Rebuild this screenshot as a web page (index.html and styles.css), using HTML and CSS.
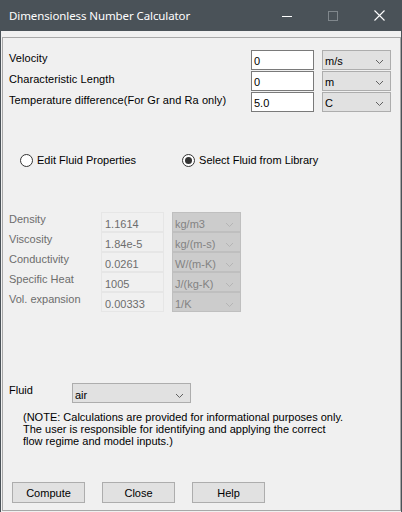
FILE: index.html
```html
<!DOCTYPE html>
<html>
<head>
<meta charset="utf-8">
<link rel="stylesheet" href="styles.css">
</head>
<body>
<div class="window">
  <div class="titlebar">
    <div class="title">Dimensionless Number Calculator</div>
    <div class="caption-btns">
      <div class="cap-btn"><svg width="10" height="10" viewBox="0 0 10 10"><line x1="0" y1="5.5" x2="10" y2="5.5" stroke="#ffffff" stroke-width="1"/></svg></div>
      <div class="cap-btn"><svg width="10" height="10" viewBox="0 0 10 10"><rect x="0.5" y="0.5" width="9" height="9" fill="none" stroke="#80878c" stroke-width="1"/></svg></div>
      <div class="cap-btn"><svg width="11" height="11" viewBox="0 0 11 11"><path d="M0.5 0.5 L10.5 10.5 M10.5 0.5 L0.5 10.5" stroke="#ffffff" stroke-width="1.1" fill="none"/></svg></div>
    </div>
  </div>
  <div class="client">
    <div class="panel">
      <div class="params">
        <div class="prow">
          <div class="plabel">Velocity</div>
          <div class="tbox">0</div>
          <div class="combo"><span>m/s</span><svg class="chev" width="7" height="4" viewBox="0 0 7 4"><polyline points="0,0 3.5,3.5 7,0" fill="none" stroke="#606060" stroke-width="1"/></svg></div>
        </div>
        <div class="prow">
          <div class="plabel">Characteristic Length</div>
          <div class="tbox">0</div>
          <div class="combo"><span>m</span><svg class="chev" width="7" height="4" viewBox="0 0 7 4"><polyline points="0,0 3.5,3.5 7,0" fill="none" stroke="#606060" stroke-width="1"/></svg></div>
        </div>
        <div class="prow">
          <div class="plabel">Temperature difference(For Gr and Ra only)</div>
          <div class="tbox">5.0</div>
          <div class="combo"><span>C</span><svg class="chev" width="7" height="4" viewBox="0 0 7 4"><polyline points="0,0 3.5,3.5 7,0" fill="none" stroke="#606060" stroke-width="1"/></svg></div>
        </div>
      </div>

      <div class="radios">
        <div class="radio"><span class="circle"></span><span>Edit Fluid Properties</span></div>
        <div class="radio radio-second"><span class="circle checked"></span><span>Select Fluid from Library</span></div>
      </div>

      <div class="props">
        <div class="qrow"><div class="qlabel">Density</div><div class="dbox">1.1614</div><div class="dcombo"><span>kg/m3</span><svg class="chev" width="7" height="4" viewBox="0 0 7 4"><polyline points="0,0 3.5,3.5 7,0" fill="none" stroke="#b5b5b5" stroke-width="1"/></svg></div></div>
        <div class="qrow"><div class="qlabel">Viscosity</div><div class="dbox">1.84e-5</div><div class="dcombo"><span>kg/(m-s)</span><svg class="chev" width="7" height="4" viewBox="0 0 7 4"><polyline points="0,0 3.5,3.5 7,0" fill="none" stroke="#b5b5b5" stroke-width="1"/></svg></div></div>
        <div class="qrow"><div class="qlabel">Conductivity</div><div class="dbox">0.0261</div><div class="dcombo"><span>W/(m-K)</span><svg class="chev" width="7" height="4" viewBox="0 0 7 4"><polyline points="0,0 3.5,3.5 7,0" fill="none" stroke="#b5b5b5" stroke-width="1"/></svg></div></div>
        <div class="qrow"><div class="qlabel">Specific Heat</div><div class="dbox">1005</div><div class="dcombo"><span>J/(kg-K)</span><svg class="chev" width="7" height="4" viewBox="0 0 7 4"><polyline points="0,0 3.5,3.5 7,0" fill="none" stroke="#b5b5b5" stroke-width="1"/></svg></div></div>
        <div class="qrow"><div class="qlabel">Vol. expansion</div><div class="dbox">0.00333</div><div class="dcombo"><span>1/K</span><svg class="chev" width="7" height="4" viewBox="0 0 7 4"><polyline points="0,0 3.5,3.5 7,0" fill="none" stroke="#b5b5b5" stroke-width="1"/></svg></div></div>
      </div>

      <div class="fluid">
        <div class="flabel">Fluid</div>
        <div class="fcombo"><span>air</span><svg class="chev" width="7" height="4" viewBox="0 0 7 4"><polyline points="0,0 3.5,3.5 7,0" fill="none" stroke="#606060" stroke-width="1"/></svg></div>
      </div>

      <div class="note">(NOTE: Calculations are provided for informational purposes only.<br>The user is responsible for identifying and applying the correct<br>flow regime and model inputs.)</div>

      <div class="buttons">
        <div class="btn">Compute</div>
        <div class="btn">Close</div>
        <div class="btn">Help</div>
      </div>
    </div>
  </div>
</div>
</body>
</html>
```

FILE: styles.css
```css
* { box-sizing: border-box; }
html, body { margin: 0; padding: 0; }
body {
  width: 402px;
  height: 512px;
  overflow: hidden;
  font-family: "Liberation Sans", Arial, sans-serif;
  font-size: 11px;
  color: #000;
}
.window {
  width: 402px;
  height: 512px;
  display: flex;
  flex-direction: column;
  background: #4a5258;
}
.titlebar {
  height: 31px;
  flex: none;
  display: flex;
  align-items: center;
  justify-content: space-between;
  color: #ffffff;
}
.title {
  font-family: "Noto Sans", "Open Sans", sans-serif;
  font-size: 11.5px;
  padding-left: 9px;
  padding-bottom: 1px;
  letter-spacing: -0.1px;
}
.caption-btns {
  display: flex;
  height: 31px;
}
.cap-btn {
  width: 46px;
  height: 31px;
  display: flex;
  align-items: center;
  justify-content: center;
}
.cap-btn svg { display: block; }
.client {
  flex: 1;
  margin: 0 1px 1px 1px;
  background: #f0f0f0;
  display: flex;
  flex-direction: column;
}
.panel {
  margin: 6px 0 1px 1px;
  height: 474px;
  border: 1px solid #a8a8a8;
  display: flex;
  flex-direction: column;
}
.params {
  margin-top: 12px;
  display: flex;
  flex-direction: column;
  gap: 1px;
}
.prow {
  display: flex;
  height: 20px;
  padding-left: 6px;
}
.plabel {
  flex: 1;
  line-height: 13px;
  padding-top: 2px;
  letter-spacing: 0.08px;
}
.tbox {
  width: 63px;
  height: 20px;
  border: 1px solid #7a7a7a;
  background: #ffffff;
  padding: 3px 0 0 2px;
  line-height: 14px;
}
.combo, .dcombo, .fcombo {
  width: 69px;
  height: 20px;
  margin-left: 8px;
  margin-right: 9px;
  border: 1px solid #adadad;
  background: #e1e1e1;
  display: flex;
  align-items: center;
  justify-content: space-between;
  padding: 2px 7px 0 2px;
}
.chev { display: block; margin-top: 1px; }
.radios {
  margin-top: 38px;
  height: 20px;
  display: flex;
  align-items: center;
  font-size: 11px;
}
.radio {
  display: flex;
  align-items: center;
  gap: 4px;
  padding-left: 17px;
}
.radio-second { padding-left: 46px; }
.circle {
  width: 13px;
  height: 13px;
  border-radius: 50%;
  border: 1px solid #333333;
  background: #ffffff;
  display: flex;
  align-items: center;
  justify-content: center;
}
.circle.checked::after {
  content: "";
  width: 7px;
  height: 7px;
  border-radius: 50%;
  background: #333333;
}
.props {
  margin-top: 42px;
  display: flex;
  flex-direction: column;
}
.qrow {
  display: flex;
  height: 20px;
  padding-left: 6px;
}
.qlabel {
  width: 92px;
  color: #6d6d6d;
  line-height: 13px;
  padding-top: 1px;
}
.dbox {
  width: 63px;
  height: 20px;
  border: 1px solid #e6e6e6;
  background: #f0f0f0;
  color: #6d6d6d;
  padding: 4px 0 0 3px;
  line-height: 14px;
}
.dcombo {
  background: #cccccc;
  border-color: #bfbfbf;
  color: #838383;
  margin-right: 0;
  padding-top: 4px;
}
.fluid {
  margin-top: 71px;
  display: flex;
  height: 20px;
  padding-left: 6px;
}
.flabel {
  width: 63px;
  line-height: 13px;
  padding-top: 1px;
}
.fcombo {
  width: 119px;
  margin-left: 0;
  margin-right: 0;
  padding-top: 4px;
}
.note {
  margin-top: 8px;
  padding-left: 20px;
  line-height: 12px;
}
.buttons {
  margin-top: auto;
  margin-bottom: 7px;
  display: flex;
  gap: 17px;
  padding-left: 9px;
}
.btn {
  width: 73px;
  height: 21px;
  border: 1px solid #adadad;
  background: #e1e1e1;
  display: flex;
  align-items: center;
  justify-content: center;
}
```
